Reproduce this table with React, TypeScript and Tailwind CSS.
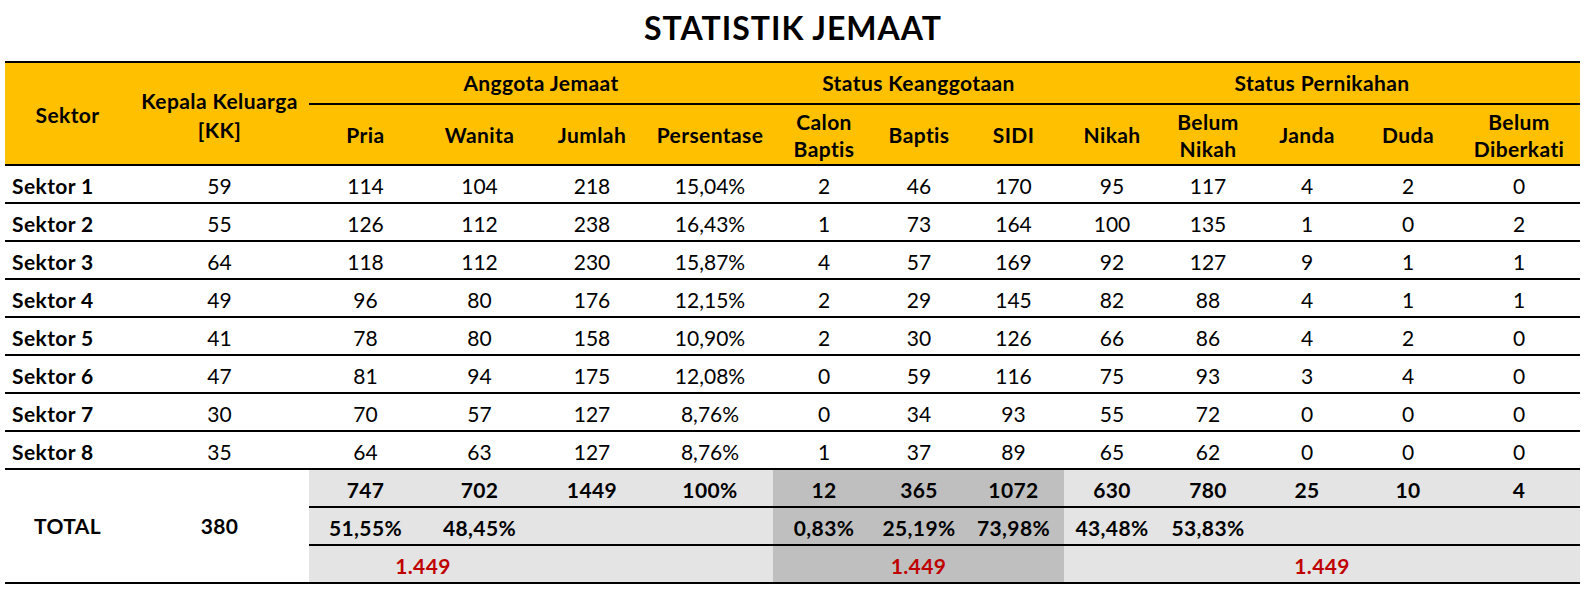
type Row = {
  name: string;
  values: string[];
};

const rows: Row[] = [
  { name: 'Sektor 1', values: ['59', '114', '104', '218', '15,04%', '2', '46', '170', '95', '117', '4', '2', '0'] },
  { name: 'Sektor 2', values: ['55', '126', '112', '238', '16,43%', '1', '73', '164', '100', '135', '1', '0', '2'] },
  { name: 'Sektor 3', values: ['64', '118', '112', '230', '15,87%', '4', '57', '169', '92', '127', '9', '1', '1'] },
  { name: 'Sektor 4', values: ['49', '96', '80', '176', '12,15%', '2', '29', '145', '82', '88', '4', '1', '1'] },
  { name: 'Sektor 5', values: ['41', '78', '80', '158', '10,90%', '2', '30', '126', '66', '86', '4', '2', '0'] },
  { name: 'Sektor 6', values: ['47', '81', '94', '175', '12,08%', '0', '59', '116', '75', '93', '3', '4', '0'] },
  { name: 'Sektor 7', values: ['30', '70', '57', '127', '8,76%', '0', '34', '93', '55', '72', '0', '0', '0'] },
  { name: 'Sektor 8', values: ['35', '64', '63', '127', '8,76%', '1', '37', '89', '65', '62', '0', '0', '0'] },
];

const widths = [
  'w-[125px]', 'w-[179px]', 'w-[113px]', 'w-[115px]', 'w-[110px]', 'w-[126px]', 'w-[102px]',
  'w-[88px]', 'w-[101px]', 'w-[96px]', 'w-[96px]', 'w-[102px]', 'w-[100px]', 'w-[122px]',
];

const totals = ['747', '702', '1449', '100%', '12', '365', '1072', '630', '780', '25', '10', '4'];
const percents = ['51,55%', '48,45%', '', '', '0,83%', '25,19%', '73,98%', '43,48%', '53,83%', '', '', ''];

const head = 'border-t-2 border-b-2 border-black bg-[#ffc000] text-center font-bold tracking-[0.4px]';
const sub = 'border-b-2 border-black bg-[#ffc000] text-center font-bold tracking-[0.4px] leading-[27px]';
const cell = 'border-b-2 border-black text-center pt-[3px]';
const bold = 'font-bold tracking-[0.4px]';

const shade = (i: number) => (i >= 4 && i <= 6 ? 'bg-[#bfbfbf]' : 'bg-[#e4e4e4]');

export default function App() {
  return (
    <div className="w-[1586px] bg-white text-black [font-family:Lato,sans-serif] text-[21px] leading-[24px]">
      <h1 className="h-[61px] pt-[12px] text-center text-[32px] leading-[32px] font-bold tracking-[1px]">STATISTIK JEMAAT</h1>
      <table className="ml-[5px] w-[1575px] table-fixed border-separate border-spacing-0">
        <colgroup>
          {widths.map((w, i) => (
            <col key={i} className={w} />
          ))}
        </colgroup>
        <tbody>
          <tr className="h-[44px]">
            <td rowSpan={2} className={`${head} pt-[3px]`}>Sektor</td>
            <td rowSpan={2} className={`${head} pt-[3px] leading-[29px]`}>
              Kepala Keluarga
              <br />
              [KK]
            </td>
            <td colSpan={4} className={head}>Anggota Jemaat</td>
            <td colSpan={3} className={head}>Status Keanggotaan</td>
            <td colSpan={5} className={head}>Status Pernikahan</td>
          </tr>
          <tr className="h-[61px]">
            <td className={sub}>Pria</td>
            <td className={sub}>Wanita</td>
            <td className={sub}>Jumlah</td>
            <td className={sub}>Persentase</td>
            <td className={sub}>Calon<br />Baptis</td>
            <td className={sub}>Baptis</td>
            <td className={sub}>SIDI</td>
            <td className={sub}>Nikah</td>
            <td className={sub}>Belum<br />Nikah</td>
            <td className={sub}>Janda</td>
            <td className={sub}>Duda</td>
            <td className={sub}>Belum<br />Diberkati</td>
          </tr>

          {rows.map((r) => (
            <tr key={r.name} className="h-[38px]">
              <td className={`border-b-2 border-black pl-[7px] pt-[3px] ${bold}`}>{r.name}</td>
              {r.values.map((v, i) => (
                <td key={i} className={cell}>{v}</td>
              ))}
            </tr>
          ))}

          <tr className="h-[38px]">
            <td rowSpan={3} className={`border-b-2 border-black text-center ${bold}`}>TOTAL</td>
            <td rowSpan={3} className={`border-b-2 border-black text-center ${bold}`}>380</td>
            {totals.map((v, i) => (
              <td key={i} className={`${cell} ${bold} ${shade(i)}`}>{v}</td>
            ))}
          </tr>
          <tr className="h-[38px]">
            {percents.map((v, i) => (
              <td key={i} className={`${cell} ${bold} ${shade(i)}`}>{v}</td>
            ))}
          </tr>
          <tr className="h-[38px]">
            <td colSpan={2} className={`${cell} ${bold} bg-[#e4e4e4] text-[#c00000]`}>1.449</td>
            <td colSpan={2} className={`${cell} bg-[#e4e4e4]`}></td>
            <td colSpan={3} className={`${cell} ${bold} bg-[#bfbfbf] text-[#c00000]`}>1.449</td>
            <td colSpan={5} className={`${cell} ${bold} bg-[#e4e4e4] text-[#c00000]`}>1.449</td>
          </tr>
        </tbody>
      </table>
    </div>
  );
}
